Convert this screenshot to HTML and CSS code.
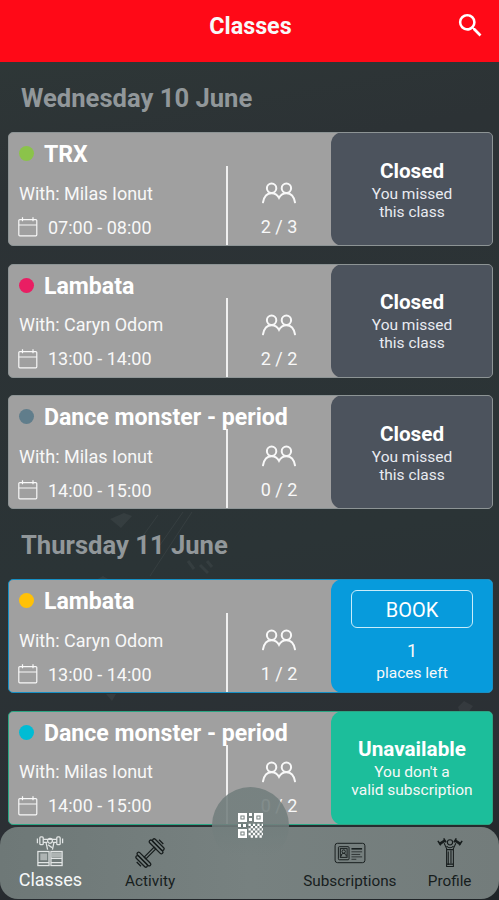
FILE: index.html
```html
<!DOCTYPE html>
<html lang="en">
<head>
<meta charset="utf-8">
<title>Classes</title>
<link rel="stylesheet" href="styles.css">
</head>
<body>
<svg class="defs" aria-hidden="true">
  <symbol id="calendar" viewBox="0 0 20 20">
    <g fill="none" stroke="currentColor" stroke-width="1.2"><rect x=".8" y="2.6" width="18" height="16.2" rx="1"/><path d="M.8 8h18M4.5.3v4M15 .3v4"/></g>
  </symbol>
  <symbol id="people" viewBox="0 0 34 22">
    <g fill="none" stroke="currentColor" stroke-width="2" stroke-linecap="round"><circle cx="9.6" cy="6.2" r="4.7"/><circle cx="24.4" cy="6.2" r="4.7"/><path d="M1 20.3C2 14.5 5.400 11.200 9.600 11.200C13 11.200 15.500 13 17 15.800C18.500 13 21 11.200 24.400 11.200C28.600 11.200 32 14.500 33 20.300"/></g>
  </symbol>
</svg>
<div class="app">
  <svg class="backdrop" viewBox="0 0 499 900" aria-hidden="true">
    <g fill="none" stroke="#fff" stroke-opacity=".05"><path d="M158 515L140 540M192 512L150 576M183 512L160 545"/><path stroke-width="3" d="M188 561l6 8M200 565l8 8M207 561l5 6"/></g>
    <path fill="#fff" fill-opacity=".05" d="M110 519l14-6 8 3-11 12zM458 707l6-6 9 5-5 7h-8zM96 580l7-4 5 3zM106 694l10 0-4 7z"/>
  </svg>
  <header class="topbar">
    <h1>Classes</h1>
    <svg class="search" viewBox="0 0 24 24" fill="#fff"><path d="M15.500 14h-.79l-.28-.27A6.470 6.470 0 0 0 16 9.500 6.500 6.500 0 1 0 9.500 16c1.610 0 3.090-.59 4.230-1.570l.27.28v.79l5 4.990L20.490 19l-4.990-5zm-6 0C7.010 14 5 11.990 5 9.500S7.010 5 9.500 5 14 7.010 14 9.500 11.990 14 9.500 14z"/></svg>
  </header>
  <main>
    <h2>Wednesday 10 June</h2>
    <section class="list">
      <article class="card closed">
        <div class="info">
          <h3><i class="dot green"></i>TRX</h3>
          <div class="details">
            <p>With: Milas Ionut</p>
            <p class="time"><svg><use href="#calendar"/></svg>07:00 - 08:00</p>
          </div>
          <div class="count"><svg><use href="#people"/></svg><span>2 / 3</span></div>
        </div>
        <div class="status"><b>Closed</b><span>You missed<br>this class</span></div>
      </article>
      <article class="card closed">
        <div class="info">
          <h3><i class="dot pink"></i>Lambata</h3>
          <div class="details">
            <p>With: Caryn Odom</p>
            <p class="time"><svg><use href="#calendar"/></svg>13:00 - 14:00</p>
          </div>
          <div class="count"><svg><use href="#people"/></svg><span>2 / 2</span></div>
        </div>
        <div class="status"><b>Closed</b><span>You missed<br>this class</span></div>
      </article>
      <article class="card closed">
        <div class="info">
          <h3><i class="dot slate"></i>Dance monster - period</h3>
          <div class="details">
            <p>With: Milas Ionut</p>
            <p class="time"><svg><use href="#calendar"/></svg>14:00 - 15:00</p>
          </div>
          <div class="count"><svg><use href="#people"/></svg><span>0 / 2</span></div>
        </div>
        <div class="status"><b>Closed</b><span>You missed<br>this class</span></div>
      </article>
    </section>
    <h2 class="second">Thursday 11 June</h2>
    <section class="list">
      <article class="card open">
        <div class="info">
          <h3><i class="dot amber"></i>Lambata</h3>
          <div class="details">
            <p>With: Caryn Odom</p>
            <p class="time"><svg><use href="#calendar"/></svg>13:00 - 14:00</p>
          </div>
          <div class="count"><svg><use href="#people"/></svg><span>1 / 2</span></div>
        </div>
        <div class="status"><button>BOOK</button><span class="places">1</span><span>places left</span></div>
      </article>
      <article class="card unavailable">
        <div class="info">
          <h3><i class="dot cyan"></i>Dance monster - period</h3>
          <div class="details">
            <p>With: Milas Ionut</p>
            <p class="time"><svg><use href="#calendar"/></svg>14:00 - 15:00</p>
          </div>
          <div class="count"><svg><use href="#people"/></svg><span>0 / 2</span></div>
        </div>
        <div class="status"><b>Unavailable</b><span>You don't a<br>valid subscription</span></div>
      </article>
    </section>
  </main>
  <nav class="tabs">
    <a class="tab active">
      <svg viewBox="0 0 28 32" fill="none" stroke="currentColor" stroke-width="1.300" opacity=".85"><path d="M7 3.500h14M7 6.500h4M17 6.500h4"/><rect x="3.500" y="1" width="3.500" height="8" rx="1"/><rect x="21" y="1" width="3.500" height="8" rx="1"/><path d="M1 2.500v5M27 2.500v5"/><circle cx="14" cy="5" r="2.500"/><path d="M10 7l1.500 7M18 7l-1.500 7M12 9l4 3"/><rect x="1.500" y="16" width="11.500" height="14.500"/><rect x="15" y="16" width="11.500" height="14.500"/><path d="M15 23h11.500M1.500 27.500H13M15 27.500h11.500"/><path fill="currentColor" stroke="none" fill-opacity=".55" d="M4 18h7v7H4zM16 17h10v5H16z"/></svg>
      <span>Classes</span>
    </a>
    <a class="tab">
      <svg viewBox="0 0 32 32" fill="none" stroke="currentColor" stroke-width="1.300" stroke-linejoin="round"><g transform="rotate(-45 16 16)"><path d="M9 14.800h14v2.400H9z"/><rect x="5.800" y="7" width="3.200" height="18" rx="1.500"/><rect x="2.600" y="8.500" width="3.200" height="15" rx="1.500"/><rect x="23" y="7" width="3.200" height="18" rx="1.500"/><rect x="26.200" y="8.500" width="3.200" height="15" rx="1.500"/><path d="M.2 13v6M31.800 13v6"/></g></svg>
      <span>Activity</span>
    </a>
    <a class="tab wide">
      <svg viewBox="0 0 32 32" fill="none" stroke="currentColor" stroke-width="1"><rect x=".6" y="6.500" width="30.800" height="20" rx="2.500"/><rect x="4" y="10" width="11" height="13.500" rx="1"/><rect x="6" y="12" width="7" height="9"/><circle cx="9.500" cy="15" r="1.700"/><path d="M7 20v-1.500c0-2 5-2 5 0V20"/><path stroke-width="1.600" d="M17.500 12.200h11"/><path stroke-opacity=".75" d="M17.500 15.300h11M17.500 18h9M17.500 20.500h11M17.500 23h5"/></svg>
      <span>Subscriptions</span>
    </a>
    <a class="tab">
      <svg viewBox="0 0 28 32" fill="none" stroke="currentColor" stroke-width="1.100"><path stroke-width="2.600" d="M3 7.300l6-3.800M25 7.300l-6-3.800"/><path stroke-width="1.600" d="M1.500 4l3 4.500M26.500 4l-3 4.500M7.500 1.500l2.500 4M20.500 1.500l-2.500 4"/><circle cx="14" cy="5.500" r="2.700"/><path d="M8 6.500l2.500 5.500v18.500h7V12L20 6.500M10.500 9.500c2 2 5 2 7 0M10.500 13h7M12.200 15v14M15 14v13M10.500 28h7"/></svg>
      <span>Profile</span>
    </a>
  </nav>
  <div class="scan">
    <svg viewBox="0 0 25 25" fill="none" stroke="#fff"><g stroke-width="2.400"><path d="M1.200 1.200h6.600v6.600H1.200zM17.200 1.200h6.600v6.600h-6.600zM1.200 17.200h6.600v6.600H1.200z"/></g><g fill="#fff" stroke="none"><path d="M3.400 3.400h2.200v2.200H3.400zM19.400 3.400h2.200v2.200h-2.200zM3.400 19.400h2.200v2.200H3.400zM11 0h3v3h-3zM11 5h3v3h-3zM0 11h3v3H0zM5 11h3v3H5z"/></g><g stroke-width="2.300" stroke-dasharray="2.300 2.100"><path d="M10.500 11.800H25M10.500 16.400H25M10.500 21H25"/><path stroke-dashoffset="2.200" d="M10.500 14.100H25M10.500 18.700H25M10.500 23.500H25"/></g></svg>
  </div>
</div>
</body>
</html>
```
FILE: styles.css
```css
* { box-sizing: border-box; }
body { margin: 0; background: #202427; font-family: Roboto, "Liberation Sans", sans-serif; color: #f8f8f8; }
h1, h2, h3, p { margin: 0; }
.defs { position: absolute; width: 0; height: 0; }
.app { position: relative; width: 499px; height: 900px; overflow: hidden; background: linear-gradient(170deg, #2f3938 0%, #2c3235 20%, #2b3436 60%, #2b2f34 85%, #202528 100%); }
.backdrop { position: absolute; inset: 0; width: 100%; height: 100%; }

.topbar { position: relative; height: 62px; padding: 10px 13px 0 15px; background: #ff0917; display: grid; grid-template-columns: 31px 1fr 31px; }
h1 { grid-column: 2; font-size: 23.300px; line-height: 33px; text-align: center; font-weight: 700; }
.search { width: 31px; height: 31px; }

main { position: relative; padding: 0 6px 0 8px; }
h2 { height: 70px; padding: 19px 0 0 13px; font-size: 25.600px; line-height: 34px; color: #91979a; }
.second { padding-top: 19px; }
.list { display: flex; flex-direction: column; gap: 17.500px; }

.card { height: 114px; display: flex; background: #a0a0a0; border: 1px solid #8d9495; border-radius: 5px; overflow: hidden; }
.info { width: 323px; display: grid; grid-template-columns: 217px 1fr; grid-template-rows: 33px 1fr; }
h3 { grid-column: 1 / 3; display: flex; align-items: flex-start; gap: 10px; padding: 8px 0 0 10px; font-size: 23.100px; line-height: 28px; white-space: nowrap; color: #fff; z-index: 1; }
.dot { width: 15px; height: 15px; margin-top: 5px; border-radius: 50%; }
.green { background: #8bc34a; }
.pink { background: #e91e63; }
.slate { background: #607d8b; }
.amber { background: #ffc107; }
.cyan { background: #00bcd4; }
.details { display: flex; flex-direction: column; gap: 10px; padding: 15.500px 0 0 10px; font-size: 18px; line-height: 24px; white-space: nowrap; }
.time { display: flex; align-items: center; }
.time svg { width: 20px; height: 20px; margin: 0 10px 1px -1px; }
.count { border-left: 2px solid #f0f0f0; display: flex; flex-direction: column; align-items: center; padding: 16px 2px 0 0; font-size: 18px; line-height: 24px; }
.count svg { width: 34px; height: 22px; margin-bottom: 11px; }
.status { flex: 1; margin: -1px; border-radius: 12px 0 0 12px; display: flex; flex-direction: column; align-items: center; justify-content: center; text-align: center; font-size: 15.500px; line-height: 18px; }
.status b { font-size: 20.700px; line-height: 26px; margin-bottom: 1px; color: #fff; }
.closed .status { background: #4c535d; color: #e9ebf1; }
.open { border-color: #168fc4; }
.open .status { background: #079bdc; justify-content: flex-start; }
.unavailable { border-color: #2aa583; }
.unavailable .status { background: #1cbe9b; }
.status button { width: 122px; height: 38px; margin: 10.500px 0 0; padding: 0; border: 1.500px solid #c9edfa; border-radius: 6px; background: none; color: #fff; font: 20px/38px Roboto, sans-serif; }
.places { font-size: 18px; line-height: 24px; margin: 11px 0 1px; }

.tabs { position: absolute; left: 0; right: 0; bottom: 1px; height: 72px; display: flex; background: linear-gradient(90deg, #6e7877, #778180 50%, #737c7b); border-radius: 18px; color: #171d1d; }
.tab { width: 100px; display: flex; flex-direction: column; align-items: center; font-size: 15.300px; line-height: 20px; padding: 10px 0 0 1px; }
.tab svg { width: 32px; height: 32px; margin-bottom: 2px; }
.tab.active { color: #f6f8f8; font-size: 18px; }
.tab.active svg { width: 30px; height: 31px; margin: -1px 0 3px; }
.tab.wide { margin-left: 100px; }
.tab.wide svg, .tab.wide + .tab svg { height: 31px; margin-bottom: 3px; }
.scan { position: absolute; left: 212px; top: 787px; width: 77px; height: 77px; border-radius: 50%; display: grid; place-items: center; background: linear-gradient(rgba(114, 126, 125, .88) 50%, rgba(114, 126, 125, 0) 90%); }
.scan svg { width: 25px; height: 25px; }
```
